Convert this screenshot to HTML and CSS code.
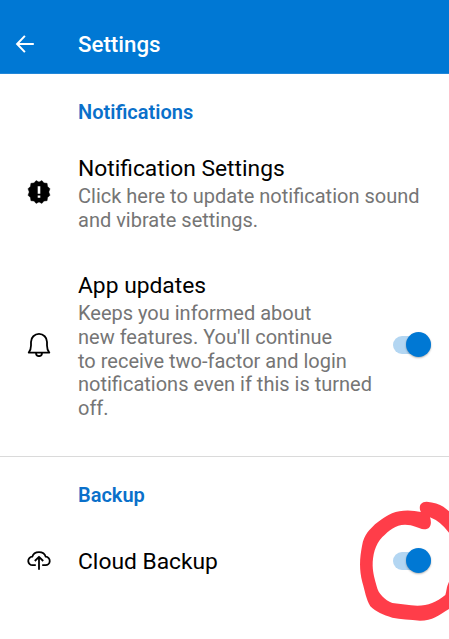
FILE: index.html
```html
<!DOCTYPE html>
<html lang="en">
<head>
<meta charset="utf-8">
<title>Settings</title>
<link rel="stylesheet" href="styles.css">
</head>
<body>
<header class="bar">
  <svg class="back" viewBox="0 0 20 20"><path d="M18.8 10H2.5M9.9 1.9 2.1 10l7.8 8.1"/></svg>
  <h1>Settings</h1>
</header>
<main>
  <section class="group">
    <h2 class="notif-head">Notifications</h2>
    <div class="row row-settings">
      <svg class="icon" viewBox="0 0 24 24"><path class="badge" d="M12 2 14.9 .6 17 2.9 20.1 3.3 20.6 6.4 23 8.8 21.8 12 23 15.2 20.6 17.6 20.1 20.7 17 21.1 14.9 23.4 12 22 9.1 23.4 7 21.1 3.9 20.7 3.4 17.6 1 15.2 2.2 12 1 8.8 3.4 6.4 3.9 3.3 7 2.9 9.1 .6Z"/><path class="mark" d="M10.7 6.3h2.6v7.4h-2.6zM10.7 15.4h2.6v2.3h-2.6z"/></svg>
      <div class="text">
        <h3 class="t-settings">Notification Settings</h3>
        <p>Click here to update notification sound<br>and vibrate settings.</p>
      </div>
    </div>
    <div class="row row-updates">
      <svg class="icon line" viewBox="0 0 24 24"><path d="M1.7 19.6c1.6-1.8 2.3-4 2.3-7V8.9a8 8 0 0 1 16 0v3.7c0 3 .7 5.2 2.3 7zM9 20c0 4.2 6 4.2 6 0"/></svg>
      <div class="text">
        <h3 class="t-updates">App updates</h3>
        <p>Keeps you informed about<br>new features. You'll continue<br>to receive two-factor and login<br>notifications even if this is turned<br>off.</p>
      </div>
      <div class="switch"><span class="knob"></span></div>
    </div>
  </section>
  <section class="group backup">
    <h2 class="backup-head">Backup</h2>
    <div class="row row-cloud">
      <svg class="icon line cloud" viewBox="0 0 24 24"><path d="M8.8 16.2H5.7a4.2 4.2 0 0 1-.4-8.5C6.1 4.9 8.6 3.2 12 3.2s5.9 1.7 6.7 4.5a4.2 4.2 0 0 1-.4 8.5h-3.1M12 20.8V8M7.8 12 12 7.8l4.2 4.2"/></svg>
      <h3 class="t-cloud">Cloud Backup</h3>
      <div class="switch"><span class="knob"></span></div>
    </div>
  </section>
</main>
<svg class="ring" viewBox="0 0 327 447"><path d="M243 66C237 57 236 35 260 35Q292 38 310 50L330 66V132Q302 94 270 82C275 97 275 118 252 118C235 115 220 104 195 104C166 104 148 121 127 141C105 164 98 196 98 227C99 252 104 265 110 289C115 312 134 330 157 339C182 341 207 347 232 347C265 347 289 337 316 315C321 299 318 292 330 269V355C297 374 279 392 240 392C211 389 181 387 157 383C129 375 108 366 91 349C78 328 75 303 67 277C56 235 60 201 66 168C72 131 90 120 105 103C132 80 158 64 190 62Q217 60 243 66Z"/></svg>
</body>
</html>
```
FILE: styles.css
```css
* { box-sizing: border-box; }
body {
  margin: 0;
  width: 449px;
  height: 639px;
  position: relative;
  overflow: hidden;
  background: #fff;
  font-family: Roboto, "Liberation Sans", sans-serif;
}
h1, h2, h3, p { margin: 0; white-space: nowrap; }
.bar {
  height: 74px;
  padding: 15px 0 0 15px;
  display: flex;
  align-items: center;
  background: #0078d4;
  border-bottom: 1px solid #2187d8;
}
.back {
  width: 20px;
  height: 20px;
  margin-right: 43px;
  fill: none;
  stroke: #fff;
  stroke-width: 2;
}
h1 { color: #fff; font-size: 22.3px; font-weight: 500; line-height: 28px; }
h2 { color: #0a70ca; font-size: 20px; font-weight: 600; line-height: 24px; margin-left: 78px; padding-bottom: 1px; }
h3 { color: #000; font-size: 22.8px; font-weight: 400; line-height: 28px; }
p { color: #757575; font-size: 20px; line-height: 23.8px; margin-top: 2px; }
.notif-head { padding-top: 26px; }
.row { display: flex; align-items: center; padding: 0 18.5px 0 27px; }
.text { flex: 1; }
.icon { width: 24px; height: 24px; margin-right: 27px; flex: none; }
.badge { fill: #000; stroke: #000; stroke-width: .4; stroke-linejoin: round; }
.mark { fill: #fff; }
.line { fill: none; stroke: #000; stroke-width: 1.8; stroke-linejoin: round; }
.row-settings { margin-top: 29px; height: 80px; }
.row-updates { margin-top: 37px; height: 151px; }
.row-settings .icon, .row-updates .icon, .row-updates .switch { margin-bottom: 4px; }
.backup { margin-top: 34px; border-top: 1px solid #dadada; }
.backup-head { padding-top: 26px; }
.row-cloud { margin-top: 27px; height: 54px; }
.row-cloud h3 { flex: 1; }
.row-cloud .icon { margin-bottom: 2px; }
.row-cloud .switch { margin-bottom: 3px; }
.switch {
  width: 38px;
  height: 18px;
  border-radius: 9px;
  background: #b3d6f2;
  display: flex;
  align-items: center;
  justify-content: flex-end;
}
.knob {
  width: 25px;
  height: 25px;
  flex: none;
  border-radius: 50%;
  background: #0078d4;
  box-shadow: 0 1px 2px rgba(0, 0, 0, .3);
}
.ring { position: absolute; left: 340px; top: 490px; width: 109px; height: 149px; fill: #ff3d49; }
```
